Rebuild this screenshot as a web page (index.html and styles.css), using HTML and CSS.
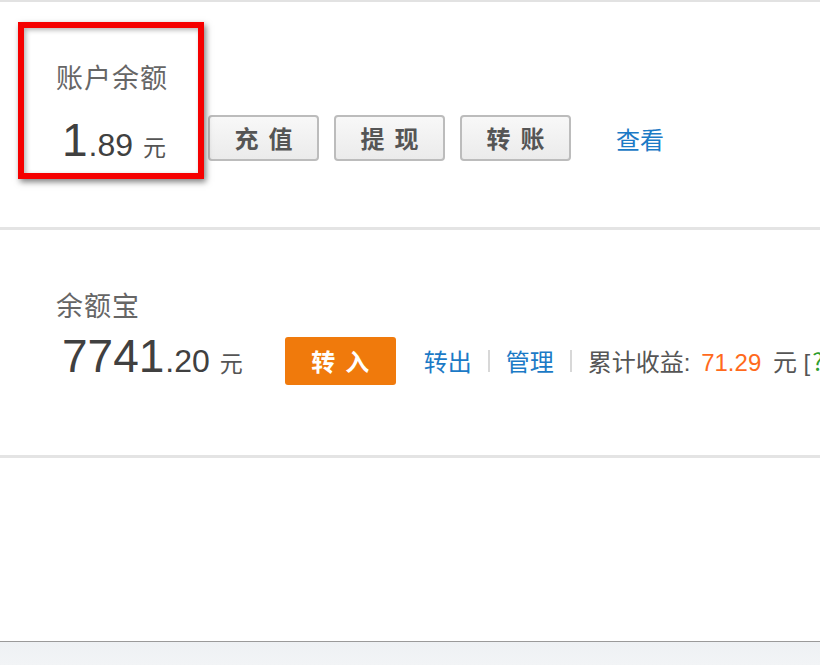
FILE: index.html
```
<!DOCTYPE html>
<html lang="zh-CN">
<head>
    <meta charset="UTF-8">
    <meta name="viewport" content="width=device-width, initial-scale=1.0">
    <title>我的账户</title>
    <link rel="stylesheet" href="styles.css">
</head>
<body>
    <div class="page">
        <section class="panel panel--account">
            <div class="mark"></div>
            <div class="panel-title">账户余额</div>
            <div class="panel-row">
                <div class="amount">
                    <span class="amount-int">1</span><span class="amount-dec">.89</span><span class="amount-unit">元</span>
                </div>
                <div class="actions">
                    <a class="btn" href="#">充值</a>
                    <a class="btn" href="#">提现</a>
                    <a class="btn" href="#">转账</a>
                    <a class="link link--view" href="#">查看</a>
                </div>
            </div>
        </section>

        <section class="panel panel--yeb">
            <div class="panel-title">余额宝</div>
            <div class="panel-row">
                <div class="amount">
                    <span class="amount-int">7741</span><span class="amount-dec">.20</span><span class="amount-unit">元</span>
                </div>
                <div class="actions">
                    <a class="btn btn--orange" href="#">转入</a>
                    <a class="link" href="#">转出</a>
                    <span class="sep"></span>
                    <a class="link" href="#">管理</a>
                    <span class="sep"></span>
                    <span class="income">累计收益: <em class="income-num">71.29</em> 元 [<a class="link link--green" href="#">?</a>]</span>
                </div>
            </div>
        </section>

        <div class="blank"></div>
        <div class="status-bar"></div>
    </div>
</body>
</html>
```

FILE: styles.css
```
html, body {
    margin: 0;
    padding: 0;
    height: 100%;
    background-color: #fff;
    font-family: "Liberation Sans", "Noto Sans CJK SC", sans-serif;
    color: #555;
    overflow: hidden;
}

.page {
    height: 100%;
    display: flex;
    flex-direction: column;
    border-top: 2px solid #e2e2e2;
    box-sizing: border-box;
}

.panel {
    position: relative;
    height: 228px;
    padding: 59px 0 0 56px;
    box-sizing: border-box;
    border-bottom: 3px solid #e4e4e4;
    flex-shrink: 0;
    white-space: nowrap;
}

.panel-title {
    font-family: "Noto Sans CJK SC", sans-serif;
    font-size: 27px;
    line-height: 32px;
    letter-spacing: 1px;
    color: #666;
}

.panel-row {
    display: flex;
    align-items: center;
}

.panel--account .panel-row {
    margin-top: 24px;
}

.panel--yeb .panel-row {
    margin-top: 6px;
}

/* annotation frame around the balance */
.mark {
    position: absolute;
    top: 20px;
    left: 18px;
    width: 186px;
    height: 157px;
    box-sizing: border-box;
    border: 6px solid #f50000;
    box-shadow: 2px 3px 6px rgba(0, 0, 0, 0.5), inset 2px 2px 5px rgba(0, 0, 0, 0.3);
    pointer-events: none;
}

.amount {
    height: 46px;
    line-height: 46px;
    color: #404040;
    padding-left: 6px;
}

.amount span {
    line-height: 1;
}

.amount-int {
    font-size: 46px;
}

.amount-dec {
    font-size: 32px;
    margin-left: 1px;
}

.amount-unit {
    font-family: "Noto Sans CJK SC", sans-serif;
    font-size: 23px;
    color: #555;
    margin-left: 10px;
}

.actions {
    display: flex;
    align-items: center;
    margin-left: 42px;
}

.btn {
    display: block;
    width: 111px;
    height: 46px;
    line-height: 42px;
    box-sizing: border-box;
    margin-right: 15px;
    padding-left: 10px;
    border: 2px solid #bcbcbc;
    border-radius: 4px;
    background: linear-gradient(to bottom, #f8f8f8, #ebebeb);
    font-family: "Noto Sans CJK SC", sans-serif;
    font-size: 24px;
    font-weight: bold;
    letter-spacing: 10px;
    text-align: center;
    color: #555;
    text-decoration: none;
}

.panel--account .btn {
    margin-top: -4px;
}

.btn--orange {
    height: 48px;
    line-height: 48px;
    margin-top: 10px;
    margin-right: 28px;
    border: none;
    border-radius: 3px;
    background: #f07a0c;
    color: #fff;
}

.link {
    font-family: "Noto Sans CJK SC", sans-serif;
    font-size: 24px;
    color: #1b7ac6;
    text-decoration: none;
}

.link--view {
    margin-left: 30px;
    margin-top: -4px;
}

.panel--yeb .link,
.income {
    margin-top: 8px;
}

.sep {
    display: inline-block;
    width: 2px;
    height: 22px;
    margin: 10px 16px 0;
    background-color: #d8d8d8;
}

.income {
    font-size: 24px;
    color: #555;
}

.income .link {
    margin: 0 0 0 2px;
}

.income-num {
    font-style: normal;
    color: #ff6a1c;
    margin: 0 5px 0 4px;
}

.link--green {
    color: #2f9e2f;
}

.blank {
    flex: 1;
    border-bottom: 1px solid #9a9a9a;
}

.status-bar {
    height: 23px;
    flex-shrink: 0;
    background: linear-gradient(to bottom, #eef1f4, #f2f4f6);
}
```
